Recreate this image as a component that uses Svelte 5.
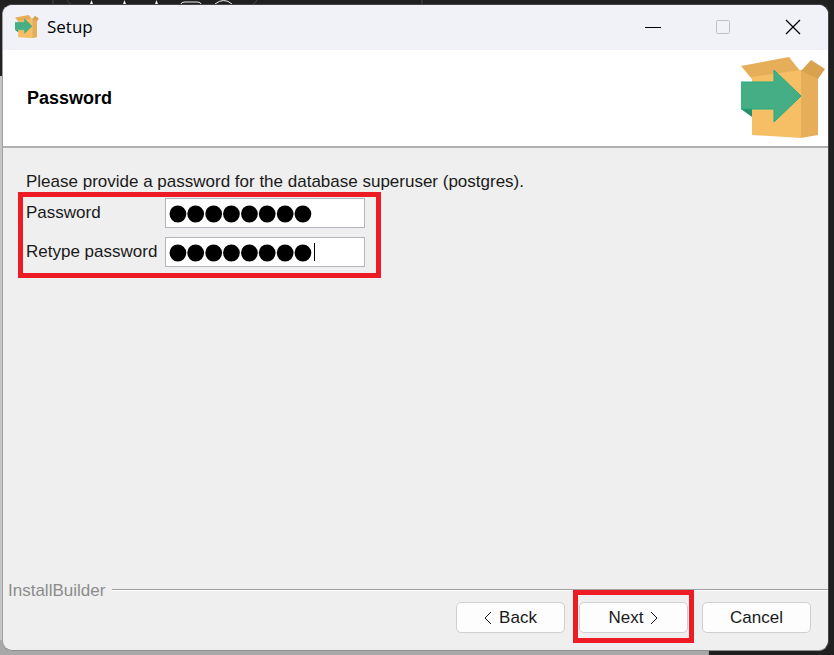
<script>
	let password = 'postgres'
	let retype = 'postgres'
	let caretShown = true
</script>

<svelte:head>
	<title>Setup</title>
</svelte:head>

{#snippet box()}
	<svg viewBox="0 0 84 82" aria-hidden="true">
		<path d="M0 9 48 0 60 15 60 22 11 22z" fill="#e7ae59" />
		<path d="M11 20 60 13 60 81 11 78z" fill="#f6bf65" />
		<path d="M60 13 77 20 77 78 60 81z" fill="#e7ae59" />
		<path d="M60 14 70 3 84 12 77 22z" fill="#d8a24f" />
		<path d="M0 52h11v8z" fill="#22916b" />
		<path d="M0 25h33V13l27 26-27 26V52H0z" fill="#46ae85" />
		<path d="M0 25h33V13l27 26-27 26V52H0" fill="none" stroke="#1cae83" />
	</svg>
{/snippet}

<div class="desktop">
	<svg class="toolbar" viewBox="0 0 440 5" aria-hidden="true">
		<path d="M67 0q1 3 4 4M257 0q-1 3-4 4M422 0v5M53 0v5" fill="none" stroke="#444" />
		<path d="M90 4l1.500-4 1.500 4zM123 4l1.500-4 1.500 4zM155 4l1.500-4 1.500 4z" fill="#eee" />
		<path d="M181 4q0-2 4-2h12q4 0 4 2M215 4q9-7 17 0" fill="none" stroke="#eee" />
	</svg>

	<div class="window">
		<div class="titlebar">
			<span class="logo">{@render box()}</span>
			<span class="title">Setup</span>
			<button class="control" aria-label="Minimize">
				<svg viewBox="0 0 16 16"><path d="M0 8.500h16" stroke="#000" /></svg>
			</button>
			<button class="control" aria-label="Maximize" disabled>
				<svg viewBox="0 0 16 16">
					<rect x="1.500" y="1.500" width="13" height="13" rx="1" fill="none" stroke="#bfc0c5" />
				</svg>
			</button>
			<button class="control" aria-label="Close">
				<svg viewBox="0 0 16 16"><path d="M1 1l14 14M15 1L1 15" stroke="#000" stroke-width="1.300" /></svg>
			</button>
		</div>

		<header>
			<h1>Password</h1>
			<span class="banner">{@render box()}</span>
		</header>

		<main>
			<p>Please provide a password for the database superuser (postgres).</p>
			<div class="fields">
				<label for="password">Password</label>
				<div class="entry">
					<input id="password" type="password" bind:value={password} />
				</div>
				<label for="retype">Retype password</label>
				<div class="entry">
					<input id="retype" type="password" bind:value={retype} />
					{#if caretShown}<span class="caret"></span>{/if}
				</div>
			</div>
		</main>

		<footer>
			<div class="brand"><span>InstallBuilder</span></div>
			<div class="buttons">
				<button><svg viewBox="0 0 8 14"><path d="M7 1L1 7l6 6" /></svg>Back</button>
				<div class="mark">
					<button>Next<svg viewBox="0 0 8 14"><path d="M1 1l6 6-6 6" /></svg></button>
				</div>
				<button>Cancel</button>
			</div>
		</footer>
	</div>
</div>

<style>
	:global(body) {
		margin: 0;
	}

	.desktop {
		position: relative;
		box-sizing: border-box;
		min-height: 100vh;
		padding: 4px 5px 4px 2px;
		display: flex;
		background:
			linear-gradient(#a8a8a8, #a8a8a8) left bottom / 85% 15px no-repeat,
			linear-gradient(#222 76px, #c4c4c8 76px) left top / 5px 100% no-repeat,
			#202020;
		font-family: 'Liberation Sans', Arial, sans-serif;
		font-size: 17px;
		color: #1a1a1a;
	}

	.toolbar {
		position: absolute;
		left: 0;
		top: 0;
		width: 440px;
		height: 5px;
	}

	.window {
		position: relative;
		flex: 1;
		display: flex;
		flex-direction: column;
		overflow: hidden;
		border: 1px solid;
		border-color: #444 #444 #8f8f8f #a0a0a0;
		border-radius: 10px;
		background: #efefef;
	}

	svg {
		display: block;
	}

	.titlebar {
		display: flex;
		align-items: center;
		height: 43px;
		padding: 0 0 2px 12px;
		background: #f1f2f8;
	}

	.logo {
		width: 24px;
	}

	.title {
		flex: 1;
		padding-left: 8px;
		font-family: 'Open Sans', 'Noto Sans', sans-serif;
		color: #000;
	}

	.control {
		display: grid;
		place-items: center;
		width: 70px;
		height: 43px;
		padding: 0;
		border: 0;
		background: none;
	}

	.control svg {
		width: 16px;
		height: 16px;
	}

	header {
		display: flex;
		align-items: center;
		justify-content: space-between;
		height: 96px;
		padding: 0 3px 0 24px;
		background: #fff;
		border-bottom: 2px solid #b0b0b0;
	}

	h1 {
		margin: 0;
		font-size: 18px;
		color: #000;
	}

	.banner {
		width: 84px;
	}

	main {
		flex: 1;
		padding: 24px 15px;
	}

	p {
		margin: 0 0 0 8px;
		line-height: 20px;
	}

	.fields {
		display: inline-grid;
		grid-template-columns: 139px 200px;
		align-items: center;
		row-gap: 9px;
		padding: 1px 11px 6px 3px;
		border: 5px solid #ed1c24;
	}

	.entry {
		position: relative;
		height: 30px;
	}

	input {
		display: block;
		box-sizing: border-box;
		width: 100%;
		height: 30px;
		padding: 0 3px;
		border: 1px solid #b4b4be;
		background: #fff;
		font-family: 'Liberation Sans', Arial, sans-serif;
		font-size: 51px;
		line-height: 28px;
		color: #000;
		/* fattens the password dots */
		-webkit-text-stroke: 3px #000;
	}

	.caret {
		position: absolute;
		left: 149px;
		top: 6px;
		width: 1px;
		height: 18px;
		background: #000;
	}

	.brand {
		display: flex;
		padding-left: 5px;
		line-height: 20px;
		color: #8c8c8c;
	}

	.brand::after {
		content: '';
		flex: 1;
		height: 1px;
		margin: 8px 0 0 7px;
		background: #a0a0a0;
		border-bottom: 1px solid #fff;
	}

	.buttons {
		display: flex;
		justify-content: flex-end;
		gap: 14px;
		padding: 1px 17px 17px;
	}

	.buttons button {
		display: flex;
		align-items: center;
		justify-content: center;
		gap: 7px;
		width: 109px;
		height: 31px;
		padding: 0;
		border: 1px solid #d0d0d0;
		border-radius: 5px;
		background: #fdfdfd;
		font: inherit;
		color: inherit;
	}

	.buttons svg {
		width: 8px;
		height: 14px;
		fill: none;
		stroke: #1a1a1a;
	}

	.mark {
		position: relative;
	}

	/* red frame drawn over the button and the rule above it */
	.mark::after {
		content: '';
		position: absolute;
		inset: -12px -6px -10px;
		border: 5px solid #ed1c24;
		pointer-events: none;
	}
</style>
